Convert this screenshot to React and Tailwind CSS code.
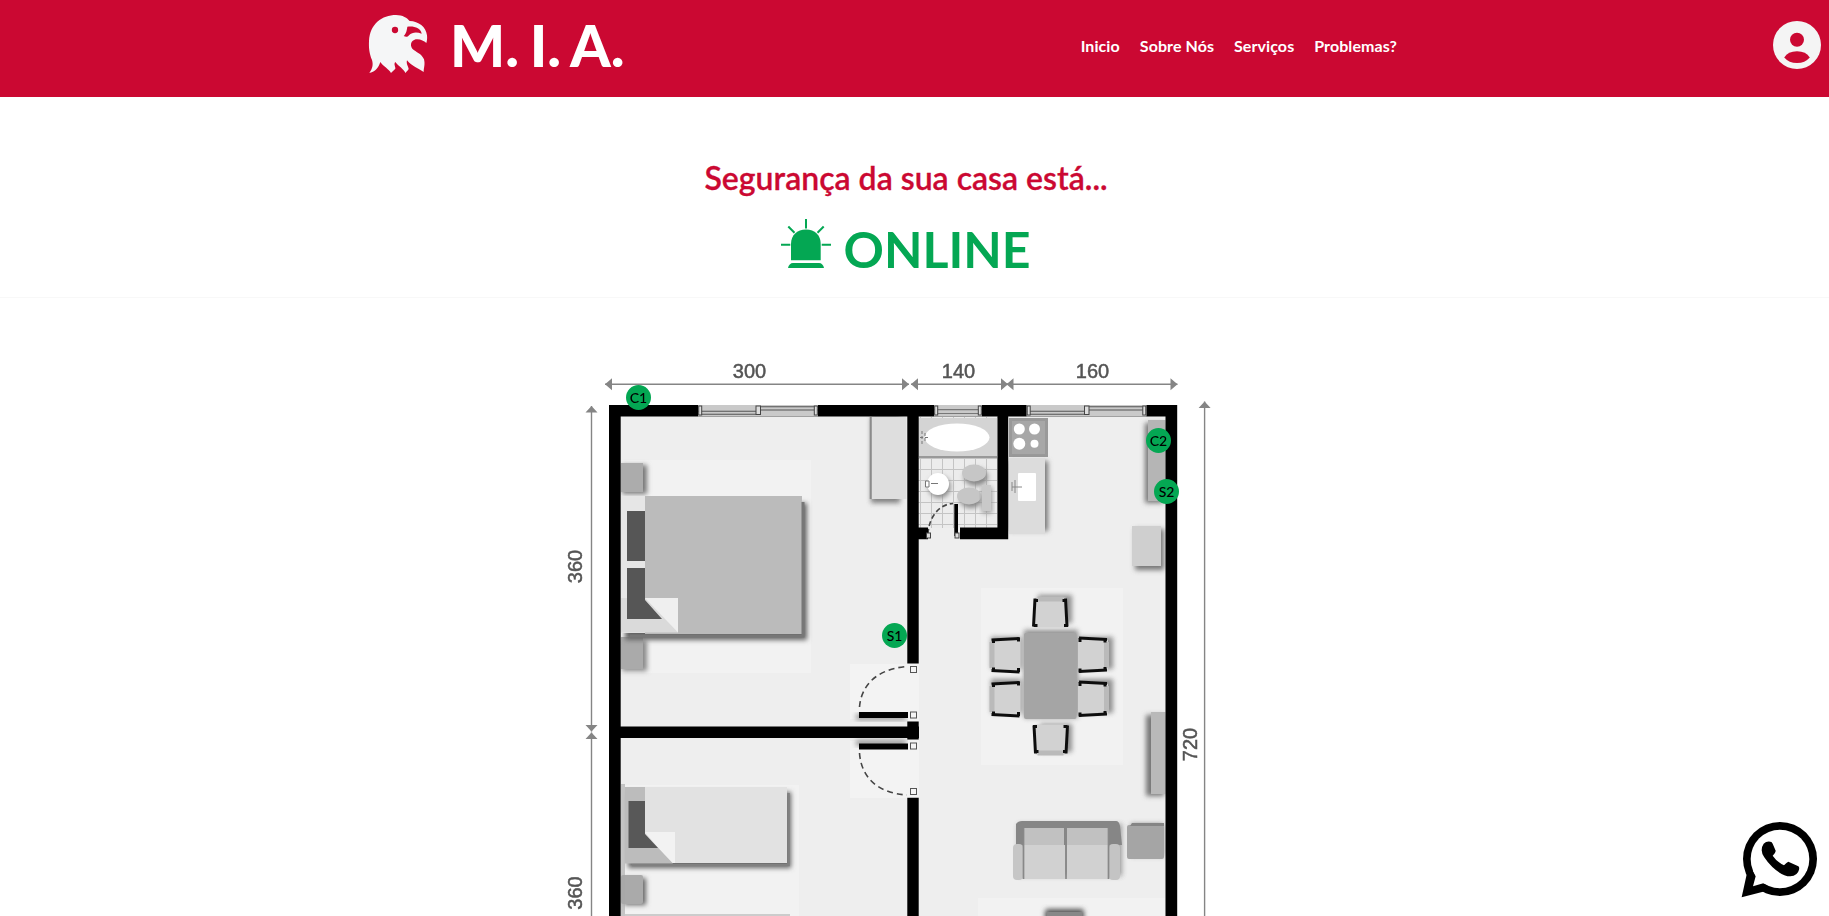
import React from "react";

function Eagle() {
  return (
    <svg viewBox="54 42 180 180" className="h-[60px] w-[60px] shrink-0">
      <path
        fill="#f5f6f7"
        d="M58 219 C68 205 70 194 66 180 C58 160 56 145 57 122 C60 72 96 45 138 45 C158 45 172 54 179 63 C206 64 228 80 231 106 C232 116 231 122 229 129 C221 122 210 116 197 118 C183 122 179 135 187 146 C198 157 215 160 222 178 C226 194 221 203 221 216 C207 207 184 197 171 181 C168 192 175 200 176 207 C173 212 170 215 166 219 C162 207 145 199 136 186 C130 193 137 199 136 206 C131 211 127 214 123 219 C117 207 99 199 91 186 C86 200 80 214 58 219Z"
      />
      <circle cx="135" cy="90" r="9.5" fill="#cb0832" />
      <path fill="#cb0832" d="M172 80 C190 77 213 83 215 101 C199 95 186 97 177 106 C172 112 167 111 161 108 C168 101 170 94 172 80Z" />
    </svg>
  );
}

function AccountIcon() {
  return (
    <svg viewBox="0 0 48 48" className="h-12 w-12">
      <circle cx="24" cy="24" r="24" fill="#f4f4f4" />
      <circle cx="24" cy="18.7" r="7" fill="#cb0832" />
      <path d="M11.2 36.5 Q15 30.2 24 30.2 Q33 30.2 36.8 36.5 Q32 42 24 42 Q16 42 11.2 36.5Z" fill="#cb0832" />
    </svg>
  );
}

function WhatsApp() {
  return (
    <svg viewBox="36 62 231 231" className="h-[77px] w-[77px]">
      <circle cx="153" cy="176" r="111" fill="#000" />
      <path d="M54 218L38 291L108 273Z" fill="#000" />
      <circle cx="153" cy="176" r="88" fill="#fff" />
      <path d="M72 212L80 228L72 258L103 249L125 257L120 200Z" fill="#fff" />
      <path
        d="M104 130 Q112 122 124 124 Q129 124 131 130 L140 151 Q141 156 131 166 Q143 184 165 195 Q173 186 178 184 L208 198 Q212 200 210 208 Q206 226 184 228 Q160 228 130 200 Q98 168 98 150 Q98 138 104 130Z"
        fill="#000"
      />
    </svg>
  );
}

function Siren() {
  return (
    <svg viewBox="0 0 50 50" className="h-[50px] w-[50px]" fill="#04a753">
      <path d="M10 41.3 V25 C10 16 16 10.5 25 10.5 S39.7 16 39.7 25 V41.3Z" />
      <path d="M7 49 C7.5 46 9.5 44 12 44 H38 C40.5 44 42.5 46 43 49Z" />
      <path d="M25 0V9.5 M0 25.7H9.3 M40.7 25.7H50 M7.3 7.5L13.5 13.7 M42.7 7.5L36.5 13.7" stroke="#04a753" strokeWidth="2" fill="none" />
    </svg>
  );
}

function Chair({ x, y, r }) {
  return (
    <g transform={`translate(${x} ${y}) rotate(${r})`}>
      <path d="M-15 -15 H15 L16 15 H-16Z" fill="#d2d2d2" />
      <rect x="-13" y="-16" width="26" height="5" fill="#bababa" />
      <path d="M-15.5 -14 L-17 14 M15 -14 L16.5 14" stroke="#111" strokeWidth="3" />
      <path d="M-16.5 -12 h4 M12 -12 h4 M-17 13 h4 M13.5 13 h4" stroke="#111" strokeWidth="3" />
    </g>
  );
}

function HArrow({ a, b, y }) {
  return (
    <g>
      <path d={`M${a} ${y}H${b}`} stroke="#858585" strokeWidth="1.4" />
      <path d={`M${a} ${y}l7 -6v12z M${b} ${y}l-7 -6v12z`} fill="#858585" />
    </g>
  );
}

function VArrow({ x, a, b }) {
  return (
    <g>
      <path d={`M${x} ${a}V${b}`} stroke="#858585" strokeWidth="1.4" />
      <path d={`M${x} ${a}l-6 6.5h12z M${x} ${b}l-6 -6.5h12z`} fill="#858585" />
    </g>
  );
}

function Window({ x, w, single }) {
  const m = x + w / 2;
  return (
    <g>
      <rect x={x} y="405" width={w} height="11.5" fill="#c9c9c9" />
      {single ? (
        <path d={`M${x} 409.7h${w} M${x} 413.5h${w}`} stroke="#777" strokeWidth="1.2" />
      ) : (
        <path d={`M${x} 411.3H${m} M${x} 414.2H${m} M${m} 406.7H${x + w} M${m} 410H${x + w}`} stroke="#555" strokeWidth="1.1" />
      )}
      <g fill="#ddd" stroke="#444" strokeWidth="1">
        <rect x={x + 0.7} y="406" width="3" height="9" />
        {!single && <rect x={m - 2} y="406" width="4.5" height="8.5" />}
        <rect x={x + w - 3.7} y="406" width="3" height="9" />
      </g>
    </g>
  );
}

function Hinge({ x, y }) {
  return <rect x={x} y={y} width="6" height="6" fill="#f5f5f5" stroke="#555" strokeWidth="1" />;
}

function FloorPlan() {
  return (
    <svg viewBox="560 350 660 566" className="block h-[566px] w-[660px]">
      <defs>
        <filter id="soft" x="-30%" y="-30%" width="160%" height="160%">
          <feGaussianBlur stdDeviation="2.4" />
        </filter>
        <filter id="edge" x="-10%" y="-10%" width="120%" height="120%">
          <feGaussianBlur stdDeviation="0.55" />
        </filter>
        <pattern id="tiles" x="920" y="458" width="11" height="11" patternUnits="userSpaceOnUse">
          <rect width="11" height="11" fill="#ececec" />
          <path d="M0 .5H11M.5 0V11" stroke="#c4c4c4" />
        </pattern>
      </defs>

      <rect x="612" y="408" width="562" height="508" fill="#eee" />
      <g filter="url(#edge)">
        <rect x="621" y="460" width="190" height="213" fill="#f2f2f2" />
        <rect x="981" y="588" width="142" height="177" fill="#f2f2f2" />
        <rect x="621" y="785" width="178" height="131" fill="#f2f2f2" />
        <rect x="850" y="664" width="68" height="55" fill="#f3f3f3" />
        <rect x="850" y="741" width="68" height="57" fill="#f3f3f3" />
        <rect x="978" y="898" width="187" height="18" fill="#f2f2f2" />

        {/* double bedroom */}
        <rect x="871" y="417" width="29" height="86" fill="#666" opacity=".8" filter="url(#soft)" />
        <rect x="871.5" y="417" width="35" height="82" fill="#dedede" />
        <path d="M870.7 417V499" stroke="#8b8b8b" strokeWidth="2" />
        <rect x="622" y="465" width="25" height="29" fill="#777" filter="url(#soft)" />
        <rect x="621" y="463" width="22" height="29" fill="#acacac" />
        <rect x="622" y="640" width="25" height="31" fill="#888" filter="url(#soft)" />
        <rect x="621" y="637" width="22" height="32" fill="#aaa" />
        <rect x="625" y="503" width="182" height="137" fill="#666" filter="url(#soft)" />
        <rect x="621" y="496" width="180" height="137" fill="#e6e6e6" />
        <rect x="645" y="496" width="157" height="138" fill="#bbb" />
        <path d="M803 502V636H630" fill="none" stroke="#777" strokeWidth="3" />
        <path d="M627 511h18v50h-18z" fill="#565656" />
        <path d="M621 598h57v34.500h-57z" fill="#dadada" />
        <path d="M645 598h33v34.500z" fill="#efefef" />
        <path d="M627 568h18v32l17 19h-35z" fill="#565656" />

        {/* single bedroom */}
        <rect x="624" y="878" width="22" height="27" fill="#666" filter="url(#soft)" />
        <rect x="621" y="875" width="22" height="29" rx="2" fill="#aaa" />
        <rect x="628" y="792" width="163" height="76" fill="#666" filter="url(#soft)" />
        <path d="M788.500 793V865H632" fill="none" stroke="#808080" strokeWidth="2.500" />
        <rect x="645" y="787" width="142" height="76" fill="#e2e2e2" />
        <rect x="621" y="784" width="4" height="132" fill="#a6a6a6" opacity=".6" />
        <path d="M645 832h30v31h-4z" fill="#f2f2f2" />
        <path d="M625 787h20v47l28 29.500h-48z" fill="#bcbcbc" />
        <path d="M628.500 801H645v33l13 14h-29.500z" fill="#585858" />
        <rect x="625" y="914" width="165" height="2" fill="#ccc" />

        {/* bathroom */}
        <rect x="918" y="417" width="80" height="111" fill="url(#tiles)" />
        <rect x="918" y="418" width="80" height="39" fill="#d4d4d4" />
        <path d="M919 457h78" stroke="#999" strokeWidth="2" />
        <ellipse cx="957" cy="437.500" rx="32.500" ry="14" fill="#fff" />
        <path d="M920 437.500h9 M922 431v13 M925 433v9" stroke="#777" strokeWidth="1" strokeDasharray="3 2" />
        <ellipse cx="976" cy="477" rx="12" ry="9" fill="#888" filter="url(#soft)" />
        <ellipse cx="974" cy="473" rx="12" ry="8.500" fill="#c6c6c6" />
        <ellipse cx="971" cy="500" rx="11" ry="8" fill="#888" filter="url(#soft)" />
        <ellipse cx="969" cy="496" rx="12" ry="8.500" fill="#c6c6c6" />
        <rect x="982" y="487" width="10" height="26" fill="#999" filter="url(#soft)" />
        <rect x="982" y="485" width="9" height="26" fill="#c9c9c9" />
        <circle cx="939.500" cy="487" r="11" fill="#888" filter="url(#soft)" />
        <circle cx="938" cy="484" r="11" fill="#fff" />
        <path d="M925.500 481h3.500v6h-3.500z M931 483.500h7" fill="#fff" stroke="#777" strokeWidth="1" />
        <path d="M928 534 C929 516 940 504 953 503.500" fill="none" stroke="#444" strokeWidth="1.600" strokeDasharray="5 3" />

        {/* kitchen */}
        <rect x="1009" y="418" width="39" height="39" fill="#999" />
        <rect x="1012" y="421" width="33" height="33" fill="#a7a7a7" />
        <circle cx="1019.300" cy="429" r="5.500" fill="#fff" />
        <circle cx="1034.500" cy="429" r="5.500" fill="#fff" />
        <circle cx="1019.300" cy="443.700" r="6" fill="#fff" />
        <circle cx="1034.500" cy="443.700" r="4" fill="#fff" />
        <rect x="1010" y="461" width="38" height="70" fill="#777" filter="url(#soft)" />
        <rect x="1009" y="458" width="36" height="76" fill="#dcdcdc" />
        <rect x="1018" y="473" width="18" height="28" rx="1" fill="#fff" />
        <path d="M1015 480v13 M1012 482v9 M1012 487h10" stroke="#888" strokeWidth="1" />

        {/* living room */}
        <rect x="1145" y="423" width="18" height="80" fill="#777" filter="url(#soft)" />
        <rect x="1148" y="420" width="17.500" height="81" fill="#b5b5b5" />
        <rect x="1135" y="529" width="29" height="41" fill="#777" filter="url(#soft)" />
        <rect x="1132" y="526" width="29" height="40" fill="#cfcfcf" />
        <rect x="1146" y="715" width="18" height="81" fill="#777" filter="url(#soft)" />
        <rect x="1151" y="712" width="14.500" height="82" fill="#b9b9b9" />

        <g fill="#777" opacity=".8" filter="url(#soft)">
          <rect x="1038" y="595" width="34" height="28" />
          <rect x="1040" y="724" width="32" height="28" />
          <rect x="991" y="637" width="30" height="32" />
          <rect x="991" y="679" width="30" height="34" />
          <rect x="1080" y="637" width="33" height="32" />
          <rect x="1080" y="679" width="33" height="34" />
          <rect x="1024" y="630" width="54" height="88" />
        </g>
        <Chair x="1050.500" y="612.500" r={0} />
        <Chair x="1050.500" y="739.500" r={180} />
        <Chair x="1005.500" y="655" r={270} />
        <Chair x="1005.500" y="699" r={270} />
        <Chair x="1093" y="655" r={90} />
        <Chair x="1093" y="699" r={90} />
        <rect x="1024" y="633" width="52.500" height="86" rx="2" fill="#a5a5a5" />

        <rect x="1018" y="824" width="104" height="52" fill="#666" opacity=".6" filter="url(#soft)" />
        <path d="M1016 824q2-3 6-3h94q3 0 4 5l2 19h-106z" fill="#868686" />
        <path d="M1024 828h40v50h-40zM1067 828h41v50h-41z" fill="#c1c1c1" />
        <path d="M1024 845h41v34h-41zM1067 845h41v34h-41z" fill="#d1d1d1" />
        <rect x="1013" y="844" width="10" height="36" rx="4" fill="#c6c6c6" />
        <rect x="1109" y="844" width="11" height="36" rx="4" fill="#c4c4c4" />
        <path d="M1023.500 828v51M1066 828v51M1108.500 828v51" stroke="#888" strokeWidth="1.700" />
        <rect x="1131" y="824" width="32" height="32" fill="#777" filter="url(#soft)" />
        <rect x="1127" y="825" width="37" height="34" rx="2" fill="#a5a5a5" />
        <path d="M1132 823h32v3h-34z" fill="#858585" />
        <rect x="1045" y="909" width="39" height="14" rx="3" fill="#555" filter="url(#soft)" />
        <rect x="1047" y="912" width="35" height="10" fill="#888" />

        {/* door leaves cast a shadow */}
        <rect x="856" y="714" width="50" height="6" fill="#999" filter="url(#soft)" />
        <rect x="856" y="740" width="50" height="6" fill="#999" filter="url(#soft)" />
        <path d="M859.500 707 C861 687 875 669 907 666.500 M859.500 753 C861 775 875 793 907 795" fill="none" stroke="#444" strokeWidth="1.600" strokeDasharray="6 4" />
      </g>

      {/* walls */}
      <g fill="#000">
        <path d="M609 405h568v11.500H609z" />
        <path d="M609 405h11.700v511H609z" />
        <path d="M1165.500 405h11.700v511h-11.700z" />
        <path d="M907.300 405h11.400v258.500h-11.400z M907.300 721.500h11.400v18h-11.400z M907.300 797.700h11.400V916h-11.400z" />
        <path d="M609 726.500h310V738H609z" />
        <path d="M997.500 405h10.700v134.300h-10.700z M960 527.500h48v11.800h-48z M918 527.500h10v11.800h-10z" />
        <path d="M954.300 504h3.700v32h-3.700z" />
        <path d="M859 712h49v6h-49z M859 743.500h49v6h-49z" />
      </g>
      <g filter="url(#edge)">
        <Window x={698} w={120} />
        <Window x={934} w={48} single />
        <Window x={1026.500} w={120} />
      </g>
      <rect x="908" y="664" width="11" height="57" fill="#f3f3f3" />
      <rect x="908" y="740" width="11" height="57" fill="#f3f3f3" />
      <Hinge x={910.500} y={666.500} />
      <Hinge x={910.500} y={712} />
      <Hinge x={910.500} y={743} />
      <Hinge x={910.500} y={788.500} />
      <rect x="926.500" y="533" width="4" height="5" fill="#ddd" stroke="#444" />
      <rect x="955" y="533" width="4" height="5" fill="#ddd" stroke="#444" />

      {/* measurements */}
      <HArrow a={605} b={909} y={384.300} />
      <HArrow a={911} b={1008} y={384.300} />
      <HArrow a={1006.500} b={1177.500} y={384.300} />
      <VArrow x={591.500} a={406} b={731.500} />
      <VArrow x={591.500} a={732.500} b={1060} />
      <VArrow x={1204.600} a={401.500} b={1060} />
      <g fill="#555" stroke="#555" strokeWidth=".5" fontSize="20" textAnchor="middle" fontFamily="'Liberation Sans', Arial, sans-serif">
        <text x="749.500" y="378">300</text>
        <text x="958.500" y="378">140</text>
        <text x="1092.500" y="378">160</text>
        <text transform="translate(582 566.500) rotate(-90)">360</text>
        <text transform="translate(582 893) rotate(-90)">360</text>
        <text transform="translate(1197 744.500) rotate(-90)">720</text>
      </g>
    </svg>
  );
}

function Sensor({ label, place }) {
  return (
    <span className={`absolute flex h-[25px] w-[25px] items-center justify-center rounded-full bg-[#04a753] text-sm leading-none font-medium text-black ${place}`}>
      {label}
    </span>
  );
}

export default function App() {
  return (
    <div className="relative flex h-screen flex-col overflow-hidden bg-white font-['Lato',sans-serif]">
      <header className="flex h-[97px] shrink-0 items-start bg-[#cb0832] pr-2 pl-[368px] text-white">
        <div className="flex items-start pt-[14px]">
          <Eagle />
          <span className="mt-px ml-[22px] text-[58px] leading-[60px] font-black whitespace-nowrap [word-spacing:-3px]">M. I. A.</span>
        </div>
        <nav className="mt-[34px] ml-auto flex gap-5 text-base leading-6 font-bold tracking-[0.08px]">
          <a>Inicio</a>
          <a>Sobre Nós</a>
          <a>Serviços</a>
          <a>Problemas?</a>
        </nav>
        <div className="mt-[21px] ml-[376px]">
          <AccountIcon />
        </div>
      </header>

      <section className="flex h-[201px] shrink-0 flex-col items-center border-b border-[#f8f8f8] pr-[17px]">
        <h2 className="mt-[61px] text-[32px] leading-10 font-semibold text-[#cb0832] [-webkit-text-stroke:0.3px_#cb0832]">Segurança da sua casa está...</h2>
        <div className="mt-[21px] flex items-start gap-3">
          <Siren />
          <span className="text-[50px] leading-[60px] font-bold text-[#04a753]">ONLINE</span>
        </div>
      </section>

      <main className="flex min-h-0 flex-1 pt-[52px] pl-[560px]">
        <div className="relative h-[566px] w-[660px] shrink-0">
          <FloorPlan />
          <Sensor label="C1" place="left-[66px] top-[35px]" />
          <Sensor label="S1" place="left-[322px] top-[273px]" />
          <Sensor label="C2" place="left-[586px] top-[78px]" />
          <Sensor label="S2" place="left-[594px] top-[129px]" />
        </div>
      </main>

      <div className="absolute right-[11px] bottom-[18px]">
        <WhatsApp />
      </div>
    </div>
  );
}
